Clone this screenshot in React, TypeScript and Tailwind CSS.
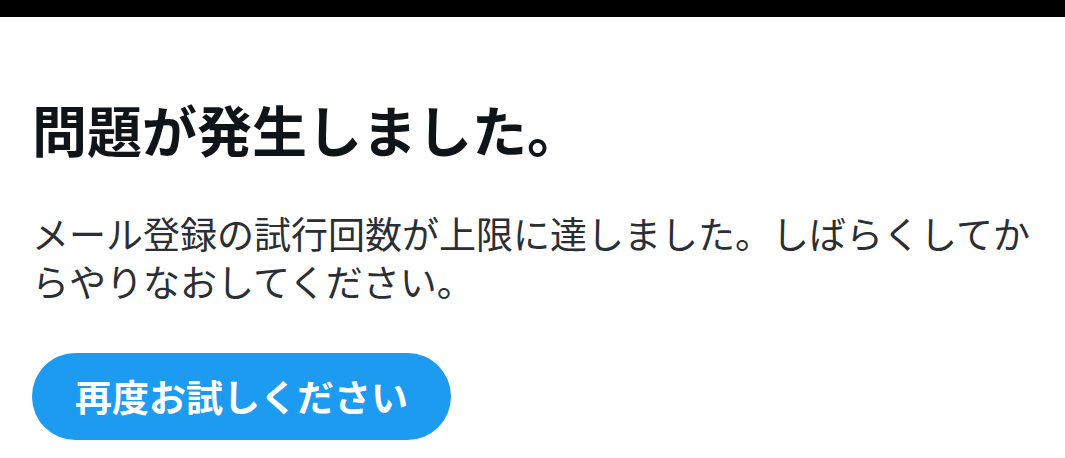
export default function App() {
  return (
    <div
      className="min-h-[458px] w-full bg-white"
      style={{ fontFamily: '"Noto Sans CJK JP", "Noto Sans", sans-serif' }}
    >
      <div className="h-[17px] bg-black" />
      <div className="px-[32px] pt-[78px]">
        <h1 className="text-[55px] font-bold leading-[66px] text-[#0f1419]">
          問題が発生しました。
        </h1>
        <p className="mt-[48px] text-[37px] leading-[48px] text-[#2b2f33]">
          メール登録の試行回数が上限に達しました。しばらくしてからやりなおしてください。
        </p>
        <button
          type="button"
          className="mt-[48px] flex h-[87px] items-center justify-center rounded-full bg-[#1d9bf0] px-[43px] text-[37px] font-bold text-white"
        >
          再度お試しください
        </button>
      </div>
    </div>
  );
}
